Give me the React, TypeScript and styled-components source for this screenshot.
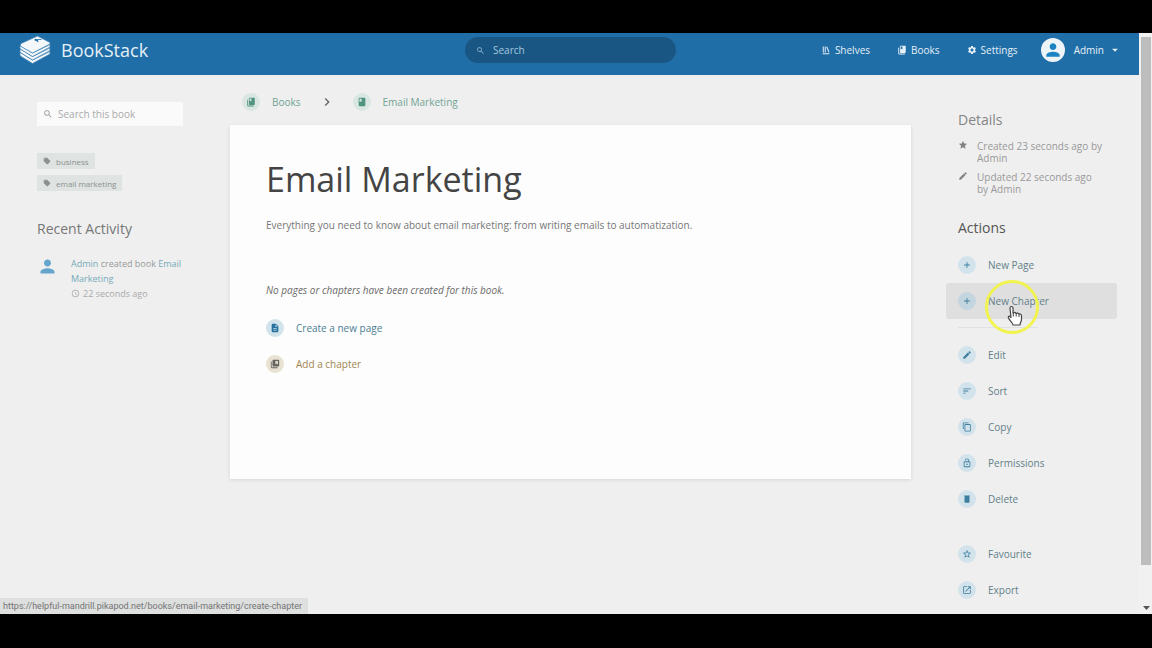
import React from "react";
import styled, { createGlobalStyle } from "styled-components";
import {
  MdAccessTime, MdAdd, MdArrowDropDown, MdChevronRight, MdContentCopy, MdEdit,
  MdDescription, MdLaunch, MdLocalOffer, MdLockOpen, MdPerson, MdSearch,
  MdSettings, MdSort, MdStar, MdStarBorder,
} from "react-icons/md";

const Global = createGlobalStyle`
  *, *::before, *::after { box-sizing: border-box; }
  body { margin: 0; background: #000; }
  body, button, input { font-family: "Open Sans", "Noto Sans", sans-serif; font-size: 10px; }
  h1, h2, p, ul { margin: 0; padding: 0; font-weight: 400; }
  a { text-decoration: none; color: inherit; }
  svg { display: block; flex: none; }
`;

const Frame = styled.div`
  min-height: 100vh;
  padding: 33px 0 34px;
  display: flex;
  background: #000;
`;
const Viewport = styled.div`
  position: relative;
  flex: 1;
  display: flex;
  background: #efefef;
`;
const Page = styled.div`
  flex: 1;
  min-width: 0;
`;
const ScrollTrack = styled.div`
  width: 13px;
  padding: 4px 1px 3px 2px;
  display: flex;
  flex-direction: column;
  justify-content: space-between;
  align-items: center;
  background: #f1f1f1;
`;
const ScrollThumb = styled.div`
  width: 100%;
  height: 92%;
  background: #bdbdbd;
`;
const ScrollArrow = styled.svg`
  color: #555;
`;

const Header = styled.header`
  height: 42px;
  padding: 0 17px 8px 19px;
  display: grid;
  grid-template-columns: 1fr 211px 1fr;
  align-items: center;
  background: #206ea7;
  color: #e6f0f7;
`;
const Brand = styled.a`
  display: flex;
  align-items: center;
  gap: 10px;
  font-size: 18px;
  line-height: 24px;
`;
const SearchPill = styled.label`
  height: 26px;
  padding: 0 11px;
  display: flex;
  align-items: center;
  gap: 8px;
  border-radius: 13px;
  background: #1a5683;
  color: #8fb9d6;
`;
const SearchInput = styled.input<{ $tone: string }>`
  flex: 1;
  min-width: 0;
  padding: 0;
  border: 0;
  outline: 0;
  background: transparent;
  color: ${(p) => p.$tone};
  &::placeholder { color: ${(p) => p.$tone}; opacity: 1; }
`;
const Nav = styled.nav`
  display: flex;
  align-items: center;
  justify-content: flex-end;
  gap: 27px;
`;
const NavLink = styled.a`
  display: flex;
  align-items: center;
  gap: 4px;
`;
const UserButton = styled.button`
  padding: 0;
  margin-left: -4px;
  border: 0;
  display: flex;
  align-items: center;
  gap: 9px;
  background: transparent;
  color: inherit;
`;
const Avatar = styled.span`
  width: 24px;
  height: 24px;
  display: grid;
  place-items: center;
  border-radius: 50%;
  background: #eef4f8;
  color: #1b83c2;
`;
const UserName = styled.span`
  display: flex;
  align-items: center;
  gap: 4px;
`;

const Columns = styled.div`
  display: grid;
  grid-template-columns: minmax(0, 230fr) minmax(0, 681fr) minmax(0, 228fr);
  align-items: start;
`;
const LeftAside = styled.aside`
  padding: 27px 47px 0 37px;
`;
const BookSearch = styled.label`
  height: 24px;
  padding: 0 6px;
  display: flex;
  align-items: center;
  gap: 5px;
  background: #fafafa;
  color: #999;
`;
const TagList = styled.ul`
  margin: 27px 0 28px;
  display: flex;
  flex-direction: column;
  align-items: flex-start;
  gap: 6px;
  list-style: none;
`;
const Tag = styled.a`
  height: 16px;
  padding: 0 6px;
  display: flex;
  align-items: center;
  gap: 5px;
  background: #dfe3e2;
  color: #8c9190;
  font-size: 8px;
`;
const Heading = styled.h2<{ $tone?: string }>`
  color: ${(p) => p.$tone || "#777"};
  font-size: 14px;
  line-height: 20px;
`;
const Activity = styled.div`
  margin-top: 17px;
  display: flex;
  gap: 13px;
  color: #999;
  font-size: 9px;
  line-height: 15px;
`;
const ActivityIcon = styled.span`
  width: 21px;
  color: #65a5cd;
`;
const ActivityText = styled.p`
  flex: 1;
  a { color: #77aab9; }
`;
const Time = styled.span`
  display: flex;
  align-items: center;
  gap: 3px;
  color: #aaa;
`;

const Center = styled.main`
  min-width: 0;
`;
const Crumbs = styled.nav`
  height: 50px;
  padding: 3px 0 0 12px;
  display: flex;
  align-items: center;
  gap: 18px;
  color: #6fa494;
`;
const IconLink = styled.a<{ $tone?: string }>`
  display: flex;
  align-items: center;
  gap: 12px;
  color: ${(p) => p.$tone || "inherit"};
`;
const Bubble = styled.span<{ $bg?: string; $tone?: string }>`
  width: 18px;
  height: 18px;
  display: grid;
  place-items: center;
  border-radius: 50%;
  background: ${(p) => p.$bg || "#d3e3eb"};
  color: ${(p) => p.$tone || "#3d7e9f"};
`;
const Card = styled.section`
  min-height: 354px;
  padding: 32px 36px;
  background: #fdfdfd;
  box-shadow: 0 1px 4px rgba(0, 0, 0, 0.1);
`;
const Title = styled.h1`
  color: #444;
  font-size: 34px;
  line-height: 44px;
`;
const Description = styled.p`
  margin-top: 16px;
  color: #777;
  line-height: 16px;
`;
const Empty = styled.p`
  margin: 49px 0 21px;
  color: #6b6b6b;
  font-style: italic;
  line-height: 16px;
`;
const EmptyActions = styled.div`
  display: flex;
  flex-direction: column;
  gap: 18px;
`;

const RightAside = styled.aside`
  padding: 35px 22px 0 35px;
`;
const Section = styled.div`
  padding-left: 12px;
`;
const Meta = styled.div`
  margin-top: 10px;
  display: flex;
  gap: 9px;
  color: #999;
  line-height: 12px;
  & + & { margin: 7px 0 23px; }
  svg { color: #828282; }
`;
const MetaText = styled.span`
  max-width: 128px;
`;
const ActionGroup = styled.div`
  margin: 9px 0 18px;
  & + & { margin: 0 0 19px; }
  &:last-child { margin: 0; }
`;
const Divider = styled.hr`
  width: 80px;
  height: 1px;
  margin: -10px 0 9px 12px;
  border: 0;
  background: #e0e2e2;
`;
const Action = styled.button<{ $hovered?: boolean }>`
  width: 100%;
  height: 36px;
  padding: 0 12px;
  display: flex;
  align-items: center;
  gap: 12px;
  border: 0;
  border-radius: 3px;
  background: ${(p) => (p.$hovered ? "#dfdfdf" : "transparent")};
  color: #628089;
  text-align: left;
`;

const StatusBar = styled.div`
  position: absolute;
  left: 0;
  bottom: 0;
  height: 16px;
  padding: 0 6px 0 3px;
  background: #dedfdf;
  color: #757575;
  font-family: Roboto, "Open Sans", sans-serif;
  font-size: 9px;
  line-height: 16px;
`;
const Pointer = styled.svg`
  position: absolute;
  top: 245px;
  right: 112px;
  pointer-events: none;
`;

const glyph = (d: string) =>
  function Glyph({ size = 10 }: { size?: number }) {
    return (
      <svg width={size} height={size} viewBox="0 0 24 24" fill="currentColor" aria-hidden="true">
        <path d={d} />
      </svg>
    );
  };

const ShelfIcon = glyph(
  "M4 20.058h15.892V22H4zM6.658 3.643V18h-2.38V3.643zM11.326 3.643V18H8.947V3.643zM14.722 3.856l5.613 13.214-2.19.93-5.613-13.214z"
);
const BooksIcon = glyph(
  "M19.252 1.708H8.663a1.77 1.77 0 0 0-1.765 1.764v14.12c0 .97.794 1.764 1.765 1.764h10.59a1.77 1.77 0 0 0 1.764-1.765V3.472a1.77 1.77 0 0 0-1.765-1.764zM8.663 3.472h4.412v7.06L10.87 9.208l-2.206 1.324zM2.966 6.61v14c0 1.1.9 2 2 2h14v-2h-14v-14z"
);
const BookIcon = glyph(
  "M18 2H6c-1.1 0-2 .9-2 2v16c0 1.1.9 2 2 2h12c1.1 0 2-.9 2-2V4c0-1.1-.9-2-2-2zM6 4h5v8l-2.5-1.5L6 12V4z"
);
const ChapterIcon = glyph(
  "M20 2H8c-1.1 0-2 .9-2 2v12c0 1.1.9 2 2 2h12c1.1 0 2-.9 2-2V4c0-1.1-.9-2-2-2zm-1 3v8l-3-2-3 2V5zM4 6H2v14c0 1.1.9 2 2 2h14v-2H4z"
);
const TrashIcon = glyph("M6 5h12v14c0 1.1-.9 2-2 2H8c-1.1 0-2-.9-2-2zM5 3h14v1H5z");

function Logo() {
  return (
    <svg width="32" height="30" viewBox="0 0 32 30" aria-hidden="true">
      <path d="M1 10.5v9l12.500 8.500L30 19l1-10z" fill="#f4f8fb" />
      <g fill="#f4f8fb" stroke="#3f82b3" strokeWidth=".8" strokeLinejoin="round">
        <path d="M1.500 17.500Q0 20 2 21.500L13.500 28.500 31 19v-2.500L13.500 25z" />
        <path d="M1.500 14Q0 16.500 2 18L13.500 25 31 15.500V13L13.500 21.500z" />
        <path d="M1.500 10.500Q0 13 2 14.500L13.500 21.500 31 12V9.500L13.500 18z" />
        <path d="M2 8.500 18.500 1 31 7.500v1.500L13.500 18 2 11.500Q.500 10 2 8.500z" />
      </g>
      <path d="m15 5 4.500 2.300-.5-2.300 4-.3-1-.8-4 .3-1.500-.5z" fill="#206ea7" />
    </svg>
  );
}

type IconType = React.ComponentType<{ size?: number }>;
type ActionItem = { label: string; icon: IconType; hovered?: boolean };

const groups: ActionItem[][] = [
  [
    { label: "New Page", icon: MdAdd },
    { label: "New Chapter", icon: MdAdd, hovered: true },
  ],
  [
    { label: "Edit", icon: MdEdit },
    { label: "Sort", icon: MdSort },
    { label: "Copy", icon: MdContentCopy },
    { label: "Permissions", icon: MdLockOpen },
    { label: "Delete", icon: TrashIcon },
  ],
  [
    { label: "Favourite", icon: MdStarBorder },
    { label: "Export", icon: MdLaunch },
  ],
];

export default function App() {
  return (
    <Frame>
      <Global />
      <Viewport>
        <Page>
          <Header>
            <Brand href="#"><Logo />BookStack</Brand>
            <SearchPill>
              <MdSearch size={9} />
              <SearchInput $tone="#a5c8df" placeholder="Search" aria-label="Search" />
            </SearchPill>
            <Nav>
              <NavLink href="#"><ShelfIcon />Shelves</NavLink>
              <NavLink href="#"><BooksIcon />Books</NavLink>
              <NavLink href="#"><MdSettings size={10} />Settings</NavLink>
              <UserButton>
                <Avatar><MdPerson size={20} /></Avatar>
                <UserName>Admin<MdArrowDropDown size={14} /></UserName>
              </UserButton>
            </Nav>
          </Header>
          <Columns>
            <LeftAside>
              <BookSearch>
                <MdSearch size={10} />
                <SearchInput $tone="#aaa" placeholder="Search this book" aria-label="Search this book" />
              </BookSearch>
              <TagList>
                {["business", "email marketing"].map((t) => (
                  <li key={t}><Tag href="#"><MdLocalOffer size={8} />{t}</Tag></li>
                ))}
              </TagList>
              <Heading>Recent Activity</Heading>
              <Activity>
                <ActivityIcon><MdPerson size={21} /></ActivityIcon>
                <ActivityText>
                  <a href="#">Admin</a> created book <a href="#">Email Marketing</a>
                  <Time><MdAccessTime size={9} />22 seconds ago</Time>
                </ActivityText>
              </Activity>
            </LeftAside>
            <Center>
              <Crumbs aria-label="Breadcrumb">
                <IconLink href="#">
                  <Bubble $bg="#d9e6e2" $tone="#4f9480"><BooksIcon /></Bubble>Books
                </IconLink>
                <MdChevronRight size={16} color="#666" />
                <IconLink href="#">
                  <Bubble $bg="#d9e6e2" $tone="#4f9480"><BookIcon /></Bubble>Email Marketing
                </IconLink>
              </Crumbs>
              <Card>
                <Title>Email Marketing</Title>
                <Description>
                  Everything you need to know about email marketing: from writing emails to automatization.
                </Description>
                <Empty>No pages or chapters have been created for this book.</Empty>
                <EmptyActions>
                  <IconLink href="#" $tone="#4b7d92">
                    <Bubble $tone="#26719e"><MdDescription size={10} /></Bubble>Create a new page
                  </IconLink>
                  <IconLink href="#" $tone="#a0854f">
                    <Bubble $bg="#e8e2d2" $tone="#66645f"><ChapterIcon /></Bubble>Add a chapter
                  </IconLink>
                </EmptyActions>
              </Card>
            </Center>
            <RightAside>
              <Section>
                <Heading $tone="#858585">Details</Heading>
                <Meta><MdStar size={10} /><MetaText>Created 23 seconds ago by Admin</MetaText></Meta>
                <Meta><MdEdit size={10} /><MetaText>Updated 22 seconds ago by Admin</MetaText></Meta>
                <Heading $tone="#555">Actions</Heading>
              </Section>
              {groups.map((items, i) => (
                <ActionGroup key={i}>
                  {i === 1 && <Divider />}
                  {items.map(({ label, icon: Icon, hovered }) => (
                    <Action key={label} $hovered={hovered}>
                      <Bubble $bg={hovered ? "#c3d5df" : undefined}><Icon size={10} /></Bubble>
                      {label}
                    </Action>
                  ))}
                </ActionGroup>
              ))}
            </RightAside>
          </Columns>
        </Page>
        <ScrollTrack>
          <ScrollThumb />
          <ScrollArrow width="7" height="7" viewBox="0 0 7 7"><path d="M0 2h7L3.500 6z" fill="currentColor" /></ScrollArrow>
        </ScrollTrack>
        <StatusBar>https://helpful-mandrill.pikapod.net/books/email-marketing/create-chapter</StatusBar>
        <Pointer width="56" height="58" viewBox="0 0 56 58" aria-hidden="true">
          <circle cx="28" cy="29" r="25.500" fill="none" stroke="#f1f34f" strokeWidth="3" />
          <path
            d="M26 30c0-2 3-2 3 0v5c1-1 2.500-1 3 .5 1-.8 2.500-.5 2.800.7 1.200-.6 2.700 0 2.700 1.800v3.500c0 2-1.500 3-1.500 5.500h-7c0-2-3.500-4.500-4.500-7-.5-1.500 1-2.500 2-1l.5.5z"
            fill="#fff" stroke="#444" strokeWidth="1.200" strokeLinejoin="round"
          />
          <path d="M29.300 35v3.500M32.200 35.500v3M35 36.500v2.500" stroke="#444" strokeWidth="1" />
        </Pointer>
      </Viewport>
    </Frame>
  );
}
